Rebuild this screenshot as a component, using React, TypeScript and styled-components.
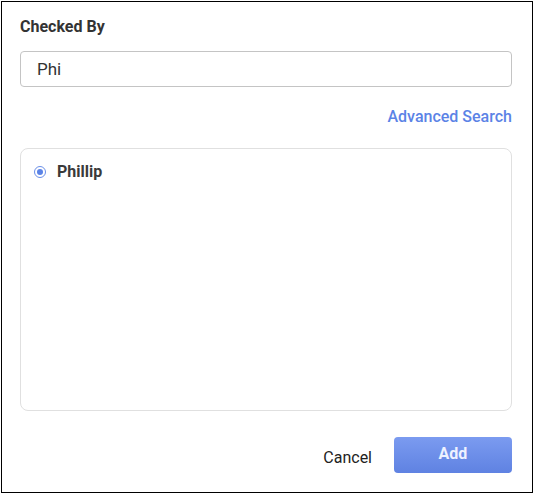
import React from "react";
import styled, { createGlobalStyle } from "styled-components";

const Global = createGlobalStyle`
  html, body { margin: 0; padding: 0; background: #fff; }
  body { font-family: Roboto, "Noto Sans", Arial, sans-serif; }
  * { box-sizing: border-box; }
`;

const Frame = styled.div`
  margin: 1px 0 0 1px;
  width: 532px;
  height: 492px;
  border: 1px solid #000;
  padding: 15px 20px 0 18px;
  display: flex;
  flex-direction: column;
  background: #fff;
`;

const Label = styled.div`
  font-size: 16px;
  font-weight: 700;
  color: #333;
  line-height: 20px;
`;

const Input = styled.input`
  margin-top: 14px;
  height: 36px;
  width: 100%;
  border: 1px solid #c4c4c4;
  border-radius: 4px;
  padding: 0 16px;
  font-family: Roboto, Arial, sans-serif;
  font-size: 17px;
  color: #333;
  outline: none;
`;

const LinkRow = styled.div`
  display: flex;
  justify-content: flex-end;
  margin-top: 20px;
`;

const Link = styled.a`
  font-size: 16px;
  font-weight: 500;
  line-height: 20px;
  color: #5b83e6;
  cursor: pointer;
`;

const ListBox = styled.div`
  margin-top: 21px;
  height: 263px;
  border: 1px solid #e0e0e0;
  border-radius: 8px;
  padding: 13px 13px;
  display: flex;
  flex-direction: column;
`;

const Option = styled.label`
  display: flex;
  align-items: center;
  gap: 11px;
  font-size: 16px;
  font-weight: 700;
  color: #3a3a3a;
  line-height: 20px;
`;

const Radio = styled.span<{ $checked: boolean }>`
  width: 12px;
  height: 12px;
  border-radius: 50%;
  border: 1.5px solid #6a8fe8;
  display: flex;
  align-items: center;
  justify-content: center;
  &::after {
    content: "";
    width: 6px;
    height: 6px;
    border-radius: 50%;
    background: ${(p) => (p.$checked ? "#5b83e6" : "transparent")};
  }
`;

const Footer = styled.div`
  margin-top: 26px;
  display: flex;
  justify-content: flex-end;
  align-items: center;
  gap: 22px;
`;

const TextButton = styled.button`
  background: none;
  border: none;
  padding: 0;
  margin-top: 4px;
  font-family: Roboto, Arial, sans-serif;
  font-size: 16px;
  color: #222;
  cursor: pointer;
`;

const PrimaryButton = styled.button`
  width: 118px;
  height: 36px;
  border: none;
  border-radius: 4px;
  background: linear-gradient(180deg, #7b9bf0 0%, #5f82e2 100%);
  color: #eef2ff;
  font-family: Roboto, Arial, sans-serif;
  font-size: 16px;
  font-weight: 700;
  padding-bottom: 4px;
  cursor: pointer;
`;

export default function App() {
  return (
    <>
      <Global />
      <Frame>
        <Label>Checked By</Label>
        <Input defaultValue="Phi" />
        <LinkRow>
          <Link>Advanced Search</Link>
        </LinkRow>
        <ListBox>
          <Option>
            <Radio $checked />
            Phillip
          </Option>
        </ListBox>
        <Footer>
          <TextButton>Cancel</TextButton>
          <PrimaryButton>Add</PrimaryButton>
        </Footer>
      </Frame>
    </>
  );
}
